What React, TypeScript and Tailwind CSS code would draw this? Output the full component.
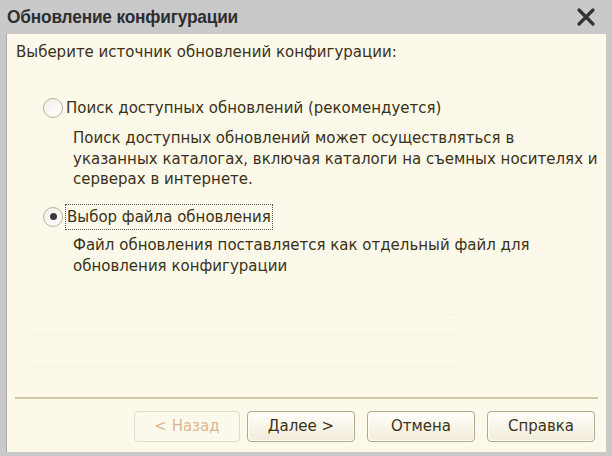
import React from 'react';

const titleFont = { fontFamily: '"Liberation Sans", Arial, sans-serif' };
const bodyFont = { fontFamily: '"DejaVu Sans", Tahoma, sans-serif' };

function Radio({ checked }: { checked?: boolean }) {
    return (
        <span className="flex h-[20px] w-[20px] shrink-0 items-center justify-center rounded-full border-[1.5px] border-[#b9b096] bg-gradient-to-br from-[#f2f0ea] to-white">
            {checked && <span className="h-[7px] w-[7px] rounded-full bg-[#3a3a3a]" />}
        </span>
    );
}

function Button({ label, disabled, className }: { label: string; disabled?: boolean; className?: string }) {
    return (
        <button
            className={
                (disabled
                    ? 'h-[31px] w-[106px] rounded-[4px] border border-[#e2dcc6] bg-[#fbf8ec] text-[#dcb98d] '
                    : 'h-[31px] w-[108px] rounded-[4px] border border-[#b3aa8a] bg-gradient-to-b from-[#fffef9] to-[#f1ecdb] text-[#3c3218] shadow-[inset_0_0_0_1px_#fffdf4] ') +
                'text-[15px] ' +
                (className ?? '')
            }
            style={bodyFont}
        >
            {label}
        </button>
    );
}

export default function App() {
    return (
        <div className="flex h-[456px] w-[612px] flex-col bg-[#c9c9c9]">
            {/* Title bar */}
            <div className="flex h-[34px] shrink-0 items-center justify-between pl-[7px] pr-[16px]" style={titleFont}>
                <span className="origin-left text-[19px] font-bold tracking-[-0.2px] text-[#2e2e2e] [transform:scaleX(0.91)]">
                    Обновление конфигурации
                </span>
                <svg width="20" height="20" viewBox="0 0 20 20">
                    <path d="M3 3 L17 17 M17 3 L3 17" stroke="#333" strokeWidth="3.2" strokeLinecap="round" />
                </svg>
            </div>

            {/* Client area */}
            <div
                className="mb-[4px] ml-[6px] mr-[6px] flex flex-1 flex-col border-l border-[#a9a9a9] bg-[#fcf9ea] text-[15px] text-[#3b3116]"
                style={bodyFont}
            >
                <div className="pl-[9px] pt-[7px]">Выберите источник обновлений конфигурации:</div>

                <div className="mt-[33px] flex items-center pl-[36px]">
                    <Radio />
                    <span className="ml-[3px]">Поиск доступных обновлений (рекомендуется)</span>
                </div>
                <div className="mt-[9px] pl-[66px] leading-[20.5px]">
                    Поиск доступных обновлений может осуществляться в<br />
                    указанных каталогах, включая каталоги на съемных носителях и<br />
                    серверах в интернете.
                </div>

                <div className="mt-[14px] flex items-center pl-[36px]">
                    <Radio checked />
                    <span className="ml-[2px] border border-dotted border-[#555] px-[1px] py-[1px]">Выбор файла обновления</span>
                </div>
                <div className="mt-[5px] pl-[66px] leading-[21px]">
                    Файл обновления поставляется как отдельный файл для<br />
                    обновления конфигурации
                </div>

                {/* faint empty rows of the hidden list */}
                <div className="ml-[20px] mt-[37px] flex w-[427px] flex-col">
                    <div className="h-px bg-[#f7f3e2]" />
                    <div className="mt-[19px] h-px bg-[#f6f2e0]" />
                    <div className="mt-[21px] h-px bg-[#f7f3e2]" />
                    <div className="mt-[9px] h-px bg-[#f6f2e0]" />
                </div>

                <div className="flex-1" />

                <div className="mx-[8px] h-[2px] bg-[#cfc6a2]" />
                <div className="flex justify-end pb-[10px] pr-[11px] pt-[12px]">
                    <Button label="< Назад" disabled />
                    <Button label="Далее >" className="ml-[7px]" />
                    <Button label="Отмена" className="ml-[12px]" />
                    <Button label="Справка" className="ml-[12px]" />
                </div>
            </div>
        </div>
    );
}
